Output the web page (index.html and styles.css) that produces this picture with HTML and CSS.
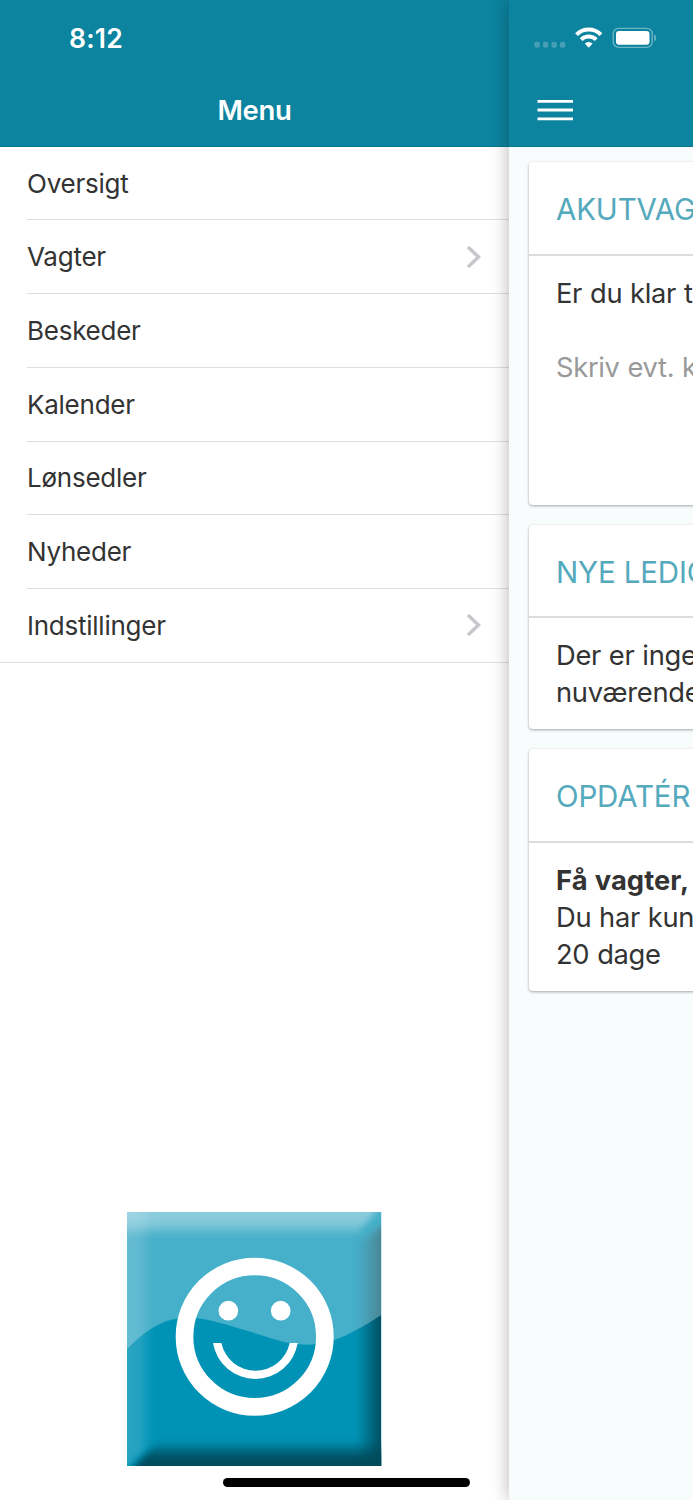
FILE: index.html
```html
<!DOCTYPE html>
<html lang="da">
<head>
  <meta charset="UTF-8">
  <meta name="viewport" content="width=device-width, initial-scale=1">
  <title>Menu</title>
  <link rel="stylesheet" href="styles.css">
</head>
<body>
  <div class="app">
    <aside class="menu">
      <header class="bar menu-bar">
        <div class="status"><span class="time">8:12</span></div>
        <h1 class="title">Menu</h1>
      </header>
      <nav>
        <ul class="list">
          <li class="item"><span>Oversigt</span></li>
          <li class="item">
            <span>Vagter</span>
            <svg class="chevron" viewBox="0 0 16 24"><path d="M3 2l10.500 10L3 22"/></svg>
          </li>
          <li class="item"><span>Beskeder</span></li>
          <li class="item"><span>Kalender</span></li>
          <li class="item"><span>Lønsedler</span></li>
          <li class="item"><span>Nyheder</span></li>
          <li class="item">
            <span>Indstillinger</span>
            <svg class="chevron" viewBox="0 0 16 24"><path d="M3 2l10.500 10L3 22"/></svg>
          </li>
        </ul>
      </nav>
      <svg class="logo" viewBox="0 0 763 763">
        <defs>
          <linearGradient id="top" x1="0" y1="0" x2="0" y2="76" gradientUnits="userSpaceOnUse">
            <stop offset="0" stop-color="#fff" stop-opacity=".37"/>
            <stop offset=".4" stop-color="#fff" stop-opacity=".35"/>
            <stop offset="1" stop-color="#fff" stop-opacity="0"/>
          </linearGradient>
          <linearGradient id="left" x1="0" y1="0" x2="76" y2="0" gradientUnits="userSpaceOnUse">
            <stop offset="0" stop-color="#fff" stop-opacity=".16"/>
            <stop offset=".5" stop-color="#fff" stop-opacity=".14"/>
            <stop offset="1" stop-color="#fff" stop-opacity="0"/>
          </linearGradient>
          <linearGradient id="right" x1="688" y1="0" x2="763" y2="0" gradientUnits="userSpaceOnUse">
            <stop offset="0" stop-color="#004a5a" stop-opacity="0"/>
            <stop offset=".5" stop-color="#004a5a" stop-opacity=".45"/>
            <stop offset="1" stop-color="#004a5a" stop-opacity=".95"/>
          </linearGradient>
          <linearGradient id="right-top" x1="688" y1="0" x2="763" y2="0" gradientUnits="userSpaceOnUse">
            <stop offset="0" stop-color="#4b8592" stop-opacity="0"/>
            <stop offset=".5" stop-color="#4b8592" stop-opacity=".45"/>
            <stop offset="1" stop-color="#4b8290" stop-opacity=".95"/>
          </linearGradient>
          <linearGradient id="bottom" x1="0" y1="686" x2="0" y2="763" gradientUnits="userSpaceOnUse">
            <stop offset="0" stop-color="#004a5a" stop-opacity="0"/>
            <stop offset=".35" stop-color="#004a5a" stop-opacity=".5"/>
            <stop offset=".7" stop-color="#004a5a" stop-opacity=".95"/>
            <stop offset="1" stop-color="#004a5a"/>
          </linearGradient>
          <filter id="soft" filterUnits="userSpaceOnUse" x="-60" y="-60" width="900" height="900" color-interpolation-filters="sRGB"><feGaussianBlur stdDeviation="9"/></filter>
          <clipPath id="tile"><path d="M0 0h763v763H0z"/></clipPath>
          <clipPath id="gloss"><path d="M0 0v411C60 350 110 325 148 320 230 307 304 342 468 389 548 408 600 392 620 385 680 362 720 336 763 309V0z"/></clipPath>
          <clipPath id="base"><path d="M0 763V411C60 350 110 325 148 320 230 307 304 342 468 389 548 408 600 392 620 385 680 362 720 336 763 309V763z"/></clipPath>
        </defs>
        <g clip-path="url(#tile)">
          <path fill="#0093b6" d="M0 0h763v763H0z"/>
          <path fill="#46afc9" clip-path="url(#gloss)" d="M0 0h763v763H0z"/>
          <!-- bevelled edges -->
          <path fill="url(#left)" filter="url(#soft)" d="M-40 -40H78V690L-40 803z"/>
          <path fill="url(#top)" filter="url(#soft)" d="M-40 -40H780L680 76H-40z"/>
          <g clip-path="url(#gloss)"><path fill="url(#right-top)" filter="url(#soft)" d="M685 105L820 0V803H685z"/></g>
          <g clip-path="url(#base)"><path fill="url(#right)" filter="url(#soft)" d="M685 85H803V803H685z"/></g>
          <path fill="url(#bottom)" filter="url(#soft)" d="M100 680H803V803H-15z"/>
        </g>
        <circle class="face" cx="383" cy="374" r="210.500"/>
        <g fill="#fff">
          <circle cx="304" cy="296" r="29.500"/>
          <circle cx="461" cy="296" r="29.500"/>
          <path d="M258 393A128.700 128.700 0 0 0 512 393H488A104.800 104.800 0 0 1 283 393z"/>
        </g>
      </svg>
    </aside>

    <main class="content">
      <header class="bar">
        <div class="status">
          <svg class="status-icons" viewBox="0 0 124 24">
            <g fill="#479fb5">
              <rect x="0.300" y="15.800" width="5.600" height="6" rx="2.300"/>
              <rect x="8.800" y="15.800" width="5.600" height="6" rx="2.300"/>
              <rect x="17.300" y="15.800" width="5.600" height="6" rx="2.300"/>
              <rect x="25.800" y="15.800" width="5.600" height="6" rx="2.300"/>
            </g>
            <g fill="none" stroke="#fff" stroke-width="4">
              <path d="M42.500 8.600a17.300 17.300 0 0 1 24.400 0"/>
              <path d="M47.200 13.600a10.700 10.700 0 0 1 15 0"/>
            </g>
            <path fill="#fff" d="M54.700 21.800l-3.900-4.200a5.700 5.700 0 0 1 7.800 0z"/>
            <rect x="79.200" y="2.400" width="39" height="19" rx="5.500" fill="none" stroke="#6db4c5" stroke-width="1.400"/>
            <rect x="82" y="5.100" width="33.500" height="13.700" rx="3" fill="#fff"/>
            <path fill="#6db4c5" d="M120.200 8.300c2.600 1.300 2.600 5.900 0 7.200z"/>
          </svg>
        </div>
        <svg class="burger" viewBox="0 0 36 22"><path d="M.5 2.300h36M.5 11h36M.5 19.900h36"/></svg>
      </header>

      <section class="card card-form">
        <h2>AKUTVAG</h2>
        <div class="card-body">
          <p>Er du klar t</p>
          <p class="placeholder">Skriv evt. k</p>
        </div>
      </section>
      <section class="card">
        <h2>NYE LEDIG</h2>
        <div class="card-body">
          <p>Der er inge<br>nuværende</p>
        </div>
      </section>
      <section class="card">
        <h2>OPDATÉR</h2>
        <div class="card-body">
          <p><b>Få vagter,</b><br>Du har kun<br>20 dage</p>
        </div>
      </section>
    </main>
    <div class="home-indicator"></div>
  </div>
</body>
</html>
```
FILE: styles.css
```css
* {
  box-sizing: border-box;
}
body {
  margin: 0;
  font-family: Inter, "Liberation Sans", sans-serif;
  font-size: 26px;
  color: #333;
  background: #fff;
}
h1, h2, p, ul {
  margin: 0;
  padding: 0;
}
.app {
  display: flex;
  width: 693px;
  height: 1500px;
  overflow: hidden;
  position: relative;
}

/* header bars */
.bar {
  height: 147.400px;
  background: #0c839f;
  border-bottom: 1px solid #087790;
}
.status {
  height: 76px;
}
.time {
  display: block;
  padding: 22px 0 0 69px;
  font-size: 26.500px;
  line-height: 32px;
  font-weight: 600;
  color: #fff;
  letter-spacing: 0.2px;
}
.title {
  font-size: 27.500px;
  line-height: 68px;
  font-weight: 600;
  text-align: center;
  color: #fff;
  letter-spacing: -0.3px;
}

/* side menu */
.menu {
  flex: 0 0 509px;
  display: flex;
  flex-direction: column;
}
.list {
  list-style: none;
  border-bottom: 1px solid #dedede;
  padding-left: 27px;
}
.item {
  display: flex;
  align-items: center;
  justify-content: space-between;
  height: 73.750px;
  padding: 0 28px 0.500px 0;
  letter-spacing: -0.25px;
}
.item:first-child {
  height: 72px;
}
.item + .item {
  border-top: 1px solid #dedede;
}
.chevron {
  width: 16px;
  height: 24px;
  fill: none;
  stroke: #c8c7cc;
  stroke-width: 3.600;
}
.logo {
  width: 254.400px;
  height: 254.400px;
  margin: auto auto 33.600px;
}
.face {
  fill: none;
  stroke: #fff;
  stroke-width: 53;
}

/* page pushed aside by the menu */
.content {
  flex: 1;
  min-width: 0;
  background: #f8fcfd;
  box-shadow: 0 0 17px rgba(0, 0, 0, 0.3);
}
.status-icons {
  display: block;
  width: 124px;
  height: 24px;
  margin-left: 25px;
  position: relative;
  top: 26px;
}
.burger {
  display: block;
  width: 36px;
  height: 22px;
  margin: 23px 0 0 28px;
  stroke: #fff;
  stroke-width: 2.800;
}
.card {
  width: 600px;
  margin: 20px 0 0 20px;
  background: #fff;
  border-radius: 4px;
  box-shadow: 0 1px 3px rgba(0, 0, 0, 0.35);
}
.card-form {
  height: 342.600px;
  margin-top: 15px;
}
.card h2 {
  height: 93.500px;
  padding-left: 27px;
  border-bottom: 2px solid #dcdcdc;
  font-size: 29.500px;
  font-weight: 400;
  line-height: 94px;
  letter-spacing: -0.150px;
  color: #55a9bd;
}
.card-body {
  padding: 20px 27px 17px;
  font-size: 27.300px;
  line-height: 36.900px;
  letter-spacing: -0.3px;
  word-spacing: 0.5px;
}
.card-body b {
  letter-spacing: 0.1px;
}
.placeholder {
  margin-top: 36.900px;
  color: #999;
}

.home-indicator {
  position: absolute;
  left: 223px;
  top: 1478px;
  width: 247px;
  height: 9px;
  border-radius: 5px;
  background: #000;
}
```
